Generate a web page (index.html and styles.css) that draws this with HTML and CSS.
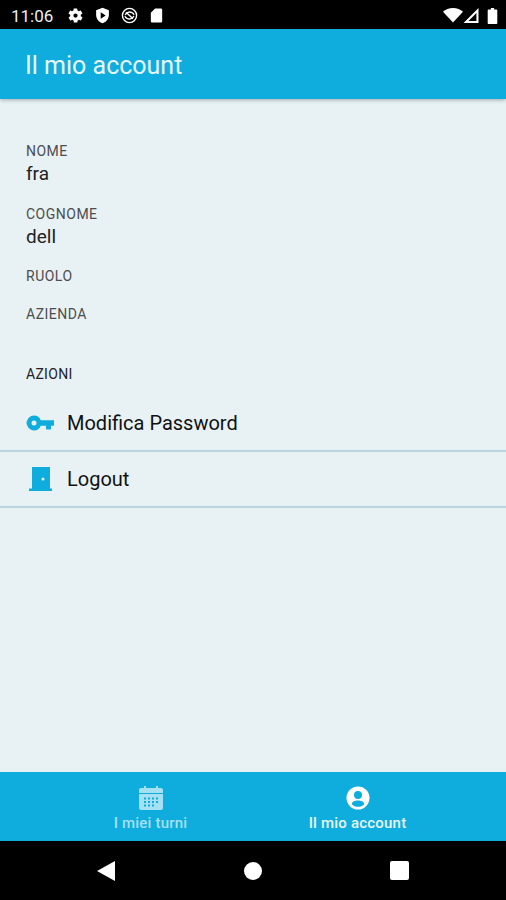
FILE: index.html
```html
<!DOCTYPE html>
<html lang="en">

<head>
    <meta charset="UTF-8">
    <meta name="viewport" content="width=device-width, initial-scale=1.0">
    <title>Il mio account</title>
    <link rel="stylesheet" href="styles.css">
</head>

<body>
    <div class="status-bar">
        <div class="status-left">
            <span class="clock">11:06</span>
            <svg class="status-icon" viewBox="0 0 24 24"><path fill-rule="evenodd" d="M19.4 13c.1-.3.1-.7.1-1s0-.7-.1-1l2.100-1.600c.2-.2.2-.4.1-.6l-2-3.500c-.1-.2-.4-.3-.6-.2l-2.500 1c-.5-.4-1.100-.7-1.700-1l-.4-2.600c0-.3-.2-.5-.5-.5h-4c-.3 0-.5.2-.5.4l-.4 2.700c-.6.2-1.200.6-1.700 1l-2.500-1c-.2-.1-.5 0-.6.2l-2 3.500c-.1.2-.1.5.1.6L4.600 11c0 .3-.1.7-.1 1s0 .7.1 1l-2.100 1.600c-.2.2-.2.4-.1.6l2 3.500c.1.2.4.3.6.2l2.500-1c.5.4 1.100.7 1.700 1l.4 2.600c0 .3.2.5.5.5h4c.3 0 .5-.2.5-.4l.4-2.700c.6-.2 1.200-.6 1.700-1l2.500 1c.2.1.5 0 .6-.2l2-3.500c.1-.2.1-.5-.1-.6zM12 15a3 3 0 1 1 0-6 3 3 0 0 1 0 6z"/></svg>
            <svg class="status-icon" viewBox="0 0 24 24"><path fill-rule="evenodd" d="M12 1 3 4.500V11c0 5.500 3.800 10.600 9 12 5.200-1.400 9-6.500 9-12V4.500zM9.500 7.500l7 4.500-7 4.500z"/></svg>
            <svg class="status-icon" viewBox="0 0 24 24"><circle cx="12" cy="12" r="10" fill="none" stroke="#fff" stroke-width="2"/><path d="M6 11.500c1-4 6-5.500 9.500-3.500 1.500.8 2.500 2 3 3M18 12.500c-1 4-6 5.500-9.500 3.500-1.500-.8-2.500-2-3-3M7 7.500l10 9" fill="none" stroke="#fff" stroke-width="2"/></svg>
            <svg class="status-icon" viewBox="0 0 24 24"><path d="M18 2h-8L4 8v12c0 1.100.9 2 2 2h12c1.100 0 2-.9 2-2V4c0-1.100-.9-2-2-2z"/></svg>
        </div>
        <div class="status-right">
            <svg class="wifi" viewBox="0 0 24 18"><path d="M12 17.500 0 4.500C3 1.800 7.200 0 12 0s9 1.800 12 4.500z"/></svg>
            <svg class="signal" viewBox="0 0 18 18"><path fill-rule="evenodd" d="M18 0v18H0zM15.500 6 6 15.500h9.500z"/></svg>
            <svg class="battery" viewBox="0 0 12 20"><path d="M4 0h4v2h3c.6 0 1 .4 1 1v16c0 .6-.4 1-1 1H1c-.6 0-1-.4-1-1V3c0-.6.4-1 1-1h3z"/></svg>
        </div>
    </div>

    <header class="app-header">Il mio account</header>

    <main class="content">
        <div class="field">
            <div class="field-label">NOME</div>
            <div class="field-value">fra</div>
        </div>
        <div class="field">
            <div class="field-label">COGNOME</div>
            <div class="field-value">dell</div>
        </div>
        <div class="field">
            <div class="field-label">RUOLO</div>
        </div>
        <div class="field">
            <div class="field-label">AZIENDA</div>
        </div>

        <div class="section-title">AZIONI</div>

        <div class="action-row">
            <svg class="action-icon" viewBox="0 0 28 24"><path fill-rule="evenodd" d="M8 4.500c3.200 0 5.800 1.900 6.800 4.800H28v5.400h-3v3.800h-5v-3.800h-5.200c-1 2.900-3.600 4.800-6.800 4.800-4 0-7-3.400-7.500-7.400C1 7.900 4 4.500 8 4.500zm0 5a2.500 2.500 0 1 0 0 5 2.500 2.500 0 0 0 0-5z"/></svg>
            <span>Modifica Password</span>
        </div>
        <div class="action-row">
            <svg class="action-icon" viewBox="0 0 28 24"><path fill-rule="evenodd" d="M6 0h18v21.500h2V24H3v-2.500h3zm11 10.500a1.500 1.500 0 1 0 0 3 1.500 1.500 0 0 0 0-3z"/></svg>
            <span>Logout</span>
        </div>
    </main>

    <footer class="tab-bar">
        <div class="tab tab-off">
            <svg class="tab-icon" viewBox="0 0 24 24"><path fill-rule="evenodd" d="M5 0h2v2h10V0h2v2h3c1.100 0 2 .9 2 2v3H0V4c0-1.100.9-2 2-2h3zM0 8h24v14c0 1.100-.9 2-2 2H2c-1.100 0-2-.9-2-2zm5 3.500v2h2v-2zm4 0v2h2v-2zm4 0v2h2v-2zm4 0v2h2v-2zM5 15v2h2v-2zm4 0v2h2v-2zm4 0v2h2v-2zm4 0v2h2v-2zM5 18.500v2h2v-2zm4 0v2h2v-2zm4 0v2h2v-2z"/></svg>
            <span>I miei turni</span>
        </div>
        <div class="tab">
            <svg class="tab-icon" viewBox="0 0 24 24"><path fill-rule="evenodd" d="M12 .5a11.500 11.500 0 1 1 0 23 11.500 11.500 0 0 1 0-23zm0 4.500a4 4 0 1 0 0 8 4 4 0 0 0 0-8zm0 9.500c-2.800 0-6 1.200-6 3.200v.8c1.500 1.500 3.600 2.300 6 2.300s4.500-.8 6-2.300v-.8c0-2-3.200-3.200-6-3.200z"/></svg>
            <span>Il mio account</span>
        </div>
    </footer>

    <nav class="nav-bar">
        <div class="nav-back"></div>
        <div class="nav-home"></div>
        <div class="nav-recent"></div>
    </nav>
</body>

</html>
```

FILE: styles.css
```css
* {
    box-sizing: border-box;
}

body {
    font-family: Roboto, sans-serif;
    background-color: #E8F1F4;
    margin: 0;
    height: 900px;
    display: flex;
    flex-direction: column;
    overflow: hidden;
}

svg {
    display: block;
    fill: #fff;
}

.status-bar {
    background-color: #000;
    color: #eee;
    height: 29px;
    flex: none;
    display: flex;
    justify-content: space-between;
    align-items: center;
    padding: 2px 8px 0 11px;
}

.status-left {
    display: flex;
    align-items: center;
}

.clock {
    font-size: 17px;
    width: 56px;
}

.status-icon {
    width: 17px;
    height: 17px;
    margin-right: 10px;
}

.status-right {
    display: flex;
    align-items: center;
}

.wifi {
    width: 20px;
    height: 15px;
}

.signal {
    width: 16px;
    height: 15px;
}

.battery {
    width: 11px;
    height: 16px;
    margin-left: 8px;
}

.app-header {
    background-color: #0EADDE;
    color: #E8F6FB;
    height: 70px;
    flex: none;
    display: flex;
    align-items: center;
    padding: 3px 25px 0;
    font-size: 25px;
    box-shadow: 0 1px 4px rgba(0, 0, 0, 0.3);
}

.content {
    flex: 1;
    padding-top: 44px;
}

.field {
    padding: 0 26px;
    margin-bottom: 22px;
}

.field-label {
    font-size: 14px;
    line-height: 16px;
    letter-spacing: 0.5px;
    color: #4d4d4d;
}

.field-value {
    font-size: 19px;
    line-height: 19.5px;
    margin-top: 5px;
    color: #222;
}

.section-title {
    font-size: 14px;
    line-height: 16px;
    letter-spacing: 0.3px;
    color: #222;
    padding: 0 26px;
    margin-top: 44px;
    margin-bottom: 14px;
}

.action-row {
    height: 56px;
    display: flex;
    align-items: center;
    padding: 0 26px;
    font-size: 20px;
    color: #111;
    border-bottom: 2px solid #B9D6DF;
}

.action-icon {
    width: 28px;
    height: 24px;
    margin-right: 13px;
    fill: #0EADDE;
}

.tab-bar {
    background-color: #0EADDE;
    height: 69px;
    flex: none;
    display: flex;
    padding: 0 45px 0 47px;
}

.tab {
    flex: 1;
    display: flex;
    flex-direction: column;
    align-items: center;
    padding-top: 14px;
    gap: 4px;
    font-size: 15px;
    font-weight: 500;
    letter-spacing: 0.2px;
    color: #E8F6FB;
}

.tab-off {
    color: #A5E0F3;
}

.tab-off svg {
    fill: #A5E0F3;
}

.tab-icon {
    width: 24px;
    height: 24px;
}

.nav-bar {
    background-color: #000;
    height: 59px;
    flex: none;
    display: flex;
    align-items: center;
    justify-content: space-between;
    padding: 0 97px;
}

.nav-back {
    width: 0;
    height: 0;
    border-top: 10px solid transparent;
    border-bottom: 10px solid transparent;
    border-right: 18px solid #fff;
}

.nav-home {
    width: 18px;
    height: 18px;
    border-radius: 50%;
    background-color: #fff;
}

.nav-recent {
    width: 19px;
    height: 19px;
    border-radius: 2px;
    background-color: #fff;
}
```
